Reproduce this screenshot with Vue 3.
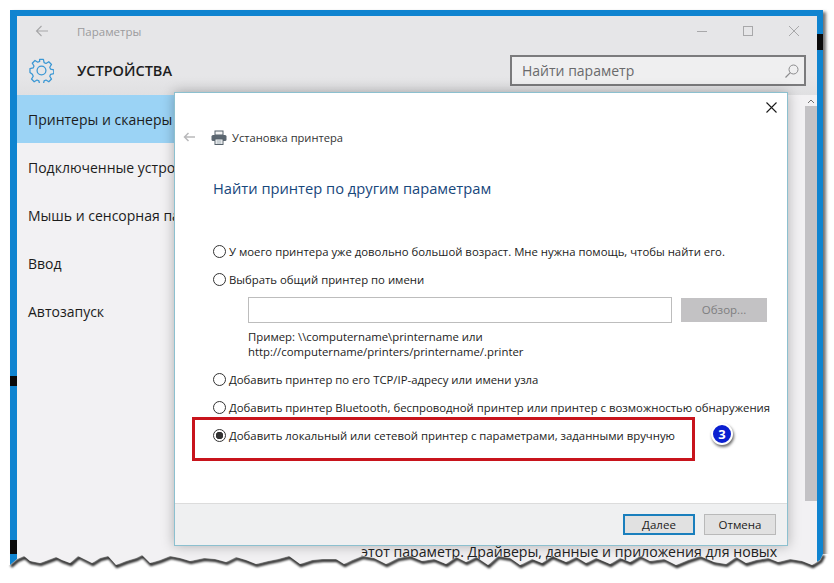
<script setup>
const menu = ['Принтеры и сканеры', 'Подключенные устройства', 'Мышь и сенсорная панель', 'Ввод', 'Автозапуск']

// Torn bottom edge of the screenshot: [x, y] vertices traced along the tear
const tips = [
  10,565, 17,559, 24,556, 30,561, 40,563, 48,560, 56,557, 62,560, 70,563, 78,556, 84,559, 92,563, 100,558, 108,556, 116,565,
  126,561, 136,558, 142,555, 150,563, 160,560, 170,556, 180,558, 190,561, 204,558, 215,559, 226,562, 236,557, 246,560, 256,564,
  268,561, 278,559, 289,556, 300,564, 312,560, 322,559, 336,559, 344,564, 352,560, 362,556, 374,558, 386,564, 398,558, 410,556,
  422,561, 434,559, 446,564, 456,557, 466,562, 476,557, 488,565, 498,556, 510,558, 520,565, 532,559, 542,563, 552,556, 566,562,
  576,557, 586,563, 596,558, 610,564, 620,558, 630,562, 640,556, 650,561, 664,559, 676,565, 688,560, 700,556, 714,562, 726,564,
  736,557, 746,563, 756,560, 768,558, 778,562, 790,559, 802,561, 812,565, 820,560, 823,554,
]
let tearLine = ''
for (let i = 0; i < tips.length; i += 2) tearLine += `${tips[i]},${tips[i + 1]} `
const tornPoints = `${tearLine}834,554 834,583 0,583 0,565`
</script>

<template>
  <div class="page">
    <div class="window">
      <header class="titlebar">
        <svg class="back" width="14" height="12" viewBox="0 0 14 12"><path d="M13 6H1.500M6.500 1 1.500 6l5 5" fill="none" stroke="#a6a6a8" stroke-width="1.100"/></svg>
        <span class="apptitle">Параметры</span>
        <div class="winbtns">
          <svg width="12" height="12" viewBox="0 0 12 12"><path d="M1 6.500h10" stroke="#a8a8aa" stroke-width="1"/></svg>
          <svg width="12" height="12" viewBox="0 0 12 12"><rect x="1.500" y="1.500" width="9" height="9" fill="none" stroke="#a8a8aa"/></svg>
          <svg width="12" height="12" viewBox="0 0 12 12"><path d="M1 1l10 10M11 1 1 11" stroke="#a8a8aa" stroke-width="1"/></svg>
        </div>
      </header>
      <div class="pagehead">
        <svg class="gear" width="25" height="25" viewBox="0 0 26 26"><path d="M11 1.500h4l.7 3.300 2 .9 2.900-1.800 2.800 2.800-1.800 2.900.9 2 3.300.7v4l-3.300.7-.9 2 1.800 2.900-2.800 2.800-2.900-1.800-2 .9-.7 3.300h-4l-.7-3.300-2-.9-2.900 1.800-2.800-2.800 1.800-2.900-.9-2L1 15v-4l3.300-.7.900-2-1.800-2.900 2.800-2.800 2.900 1.800 2-.9z" fill="none" stroke="#3a97d4" stroke-width="1.300" stroke-linejoin="round"/><circle cx="13" cy="13" r="4.600" fill="none" stroke="#3a97d4" stroke-width="1.300"/></svg>
        <h1>УСТРОЙСТВА</h1>
        <div class="search">
          <span>Найти параметр</span>
          <svg width="16" height="16" viewBox="0 0 16 16"><circle cx="9.500" cy="6.500" r="4.500" fill="none" stroke="#8b8b8d" stroke-width="1"/><path d="M6.300 9.700 1.500 14.500" stroke="#8b8b8d" stroke-width="1.200"/></svg>
        </div>
      </div>
      <div class="content">
        <nav class="menu">
          <div v-for="(item, i) in menu" :key="item" class="item" :class="{ active: i === 0 }">{{ item }}</div>
        </nav>
        <div class="main">
          <p class="under">этот параметр. Драйверы, данные и приложения для новых</p>
        </div>
        <div class="scrollbar">
          <svg class="uparrow" width="10" height="6" viewBox="0 0 10 6"><path d="M2 5l3-3 3 3" fill="none" stroke="#6f6f6f" stroke-width="1"/></svg>
          <div class="thumb"></div>
        </div>
      </div>
    </div>

    <section class="dialog">
      <div class="dlgbody">
        <div class="closerow">
          <svg width="11" height="11" viewBox="0 0 11 11"><path d="M.5.500l10 10M10.500.500l-10 10" stroke="#1a1a1a" stroke-width="1.100"/></svg>
        </div>
        <div class="wizard">
          <svg class="dlgback" width="12" height="10" viewBox="0 0 12 10"><path d="M12 5H1.500M5.500 1 1.500 5l4 4" fill="none" stroke="#b9b9bb" stroke-width="1.500"/></svg>
          <svg class="printer" width="16" height="15" viewBox="0 0 16 15"><rect x="4" y="1" width="8" height="4" fill="#f4f4f4" stroke="#55606a"/><rect x=".5" y="5" width="15" height="6" rx="1.500" fill="#5b6670"/><rect x="4" y="9" width="8" height="5.500" fill="#fff" stroke="#55606a"/><path d="M5.500 11h5M5.500 13h5" stroke="#7a8a96" stroke-width=".8"/></svg>
          <span>Установка принтера</span>
        </div>
        <h2>Найти принтер по другим параметрам</h2>
        <div class="options">
          <label class="opt"><i class="radio"></i>У моего принтера уже довольно большой возраст. Мне нужна помощь, чтобы найти его.</label>
          <label class="opt"><i class="radio"></i>Выбрать общий принтер по имени</label>
          <div class="share">
            <div class="field"></div>
            <div class="browse">Обзор...</div>
          </div>
          <p class="hint">Пример: \\computername\printername или<br>http://computername/printers/printername/.printer</p>
          <label class="opt tcp"><i class="radio"></i>Добавить принтер по его TCP/IP-адресу или имени узла</label>
          <label class="opt"><i class="radio"></i>Добавить принтер Bluetooth, беспроводной принтер или принтер с возможностью обнаружения</label>
          <label class="opt"><i class="radio on"></i>Добавить локальный или сетевой принтер с параметрами, заданными вручную</label>
        </div>
      </div>
      <footer class="dlgfoot">
        <div class="btn primary">Далее</div>
        <div class="btn">Отмена</div>
      </footer>
    </section>

    <div class="redbox"></div>
    <div class="badge">3</div>
    <i class="chip chip-a"></i>
    <i class="chip chip-b"></i>
    <i class="chip chip-c"></i>
    <svg class="torn" width="834" height="583" viewBox="0 0 834 583">
      <defs>
        <clipPath id="paper"><polygon :points="tornPoints"/></clipPath>
      </defs>
      <polygon :points="tornPoints" fill="#fff"/>
      <g clip-path="url(#paper)">
        <polyline class="tearshadow" :points="tearLine" transform="translate(1 1.500)"/>
      </g>
    </svg>
  </div>
</template>

<style>
html, body { margin: 0; background: #fff; }
</style>

<style scoped>
.page {
  position: relative;
  width: 834px;
  height: 583px;
  overflow: hidden;
  background: #fff;
  font-family: "Open Sans", "Noto Sans", sans-serif;
  color: #1c1c1c;
}
.window {
  box-sizing: border-box;
  width: 813px;
  height: 558px;
  margin: 10px 0 0 10px;
  border: solid #0f84d0;
  border-width: 6px 6px 0 7px;
  background: #f2f1f3;
  box-shadow: 3px 2px 3px rgba(0, 0, 0, .55);
  display: flex;
  flex-direction: column;
}
.titlebar {
  height: 30px;
  flex: none;
  display: flex;
  align-items: center;
  background: #e6e6e8;
  padding-left: 18px;
}
.apptitle { margin-left: 28px; font-size: 11.500px; color: #9b9b9d; }
.winbtns { margin-left: auto; margin-right: 17px; display: flex; gap: 34px; }
.pagehead {
  height: 49px;
  flex: none;
  display: flex;
  align-items: center;
  background: linear-gradient(#e6e6e8 60%, #e0e0e2);
  padding-left: 12px;
}
.gear { flex: none; }
h1 { margin: 0 0 0 23px; font-size: 14.500px; font-weight: 600; color: #1d1d1d; }
.search {
  margin-left: auto;
  margin-right: 11px;
  box-sizing: border-box;
  width: 296px;
  height: 31px;
  border: 2px solid #7b7b7d;
  background: #efeff0;
  display: flex;
  align-items: center;
  justify-content: space-between;
  padding: 0 4px 0 10px;
  font-size: 14px;
  color: #6a6a6c;
}
.content { flex: 1; display: flex; min-height: 0; }
.menu { width: 240px; flex: none; }
.item {
  height: 48px;
  line-height: 50px;
  padding-left: 11px;
  font-size: 14px;
  white-space: nowrap;
  overflow: hidden;
}
.active { background: #9bd3f5; }
.main { flex: 1; position: relative; }
.under {
  margin: 447px 0 0 104px;
  font-size: 14.150px;
  white-space: nowrap;
  color: #222;
}
.scrollbar {
  width: 12px;
  flex: none;
  background: #f2f1f3;
  display: flex;
  flex-direction: column;
  align-items: center;
}
.uparrow { margin: 3px 0 2px; }
.thumb { width: 100%; height: 395px; background: #c3c2c5; }

.dialog {
  position: absolute;
  left: 174px;
  top: 92px;
  box-sizing: border-box;
  width: 614px;
  height: 454px;
  border: 1px solid #8cc0cf;
  background: #fff;
  box-shadow: 0 0 12px rgba(0, 0, 0, .28);
  display: flex;
  flex-direction: column;
}
.dlgbody { flex: 1; min-height: 0; }
.closerow { height: 23px; display: flex; justify-content: flex-end; align-items: flex-end; padding-right: 10px; box-sizing: border-box; padding-bottom: 3px; }
.wizard {
  height: 32px;
  margin-top: 5px;
  display: flex;
  align-items: center;
  padding-left: 8px;
  font-size: 11.150px;
  color: #333;
}
.printer { margin: 0 5px 0 16px; }
h2 {
  margin: 23px 0 0 38px;
  font-size: 14.700px;
  line-height: 24px;
  font-weight: 400;
  color: #17477c;
}
.options { margin: 37px 0 0 38px; }
.opt {
  display: flex;
  align-items: center;
  height: 28px;
  font-size: 11.350px;
  white-space: nowrap;
  color: #222;
}
.radio {
  box-sizing: border-box;
  width: 13px;
  height: 13px;
  flex: none;
  margin-right: 3px;
  border: 1px solid #333;
  border-radius: 50%;
  background: #fff;
}
.radio.on {
  background: radial-gradient(circle, #333 0 3.500px, #fff 4px);
}
.share { margin: 3px 0 0 35px; display: flex; gap: 9px; height: 28px; align-items: center; }
.field { box-sizing: border-box; width: 424px; height: 26px; border: 1px solid #bdbdbd; background: #fff; }
.browse {
  box-sizing: border-box;
  width: 86px;
  height: 24px;
  background: #c3c2c4;
  color: #7e7e80;
  font-size: 11.500px;
  line-height: 24px;
  text-align: center;
}
.hint {
  margin: 5px 0 0 35px;
  font-size: 11.350px;
  line-height: 15px;
  color: #222;
}
.tcp { margin-top: 6px; }
.dlgfoot {
  height: 41px;
  flex: none;
  background: #eff0f1;
  border-top: 1px solid #dcdcdc;
  display: flex;
  justify-content: flex-end;
  align-items: center;
  gap: 9px;
  padding-right: 11px;
}
.btn {
  box-sizing: border-box;
  width: 72px;
  height: 21px;
  border: 1px solid #b9b9b9;
  background: #e1e1e1;
  font-size: 11.500px;
  line-height: 19px;
  text-align: center;
  color: #222;
}
.primary { border: 2px solid #1a7fbd; line-height: 17px; }

.redbox {
  position: absolute;
  left: 192px;
  top: 417px;
  box-sizing: border-box;
  width: 503px;
  height: 44px;
  border: 3px solid #c8141c;
}
.badge {
  position: absolute;
  left: 711px;
  top: 423px;
  box-sizing: border-box;
  width: 22px;
  height: 22px;
  border: 2px solid #fff;
  border-radius: 50%;
  background: #0a1fd0;
  color: #fff;
  font-size: 13px;
  font-weight: 700;
  line-height: 18px;
  text-align: center;
  box-shadow: 1px 2px 3px rgba(0, 0, 0, .6);
}
.chip { position: absolute; background: #0a0a0a; }
.chip-a { left: 10px; top: 376px; width: 7px; height: 10px; }
.chip-b { left: 10px; top: 540px; width: 7px; height: 14px; }
.chip-c { left: 817px; top: 34px; width: 6px; height: 16px; }
.torn { position: absolute; left: 0; top: 0; }
.tearshadow {
  fill: none;
  stroke: #222;
  stroke-width: 3px;
  filter: blur(1px);
}
</style>
